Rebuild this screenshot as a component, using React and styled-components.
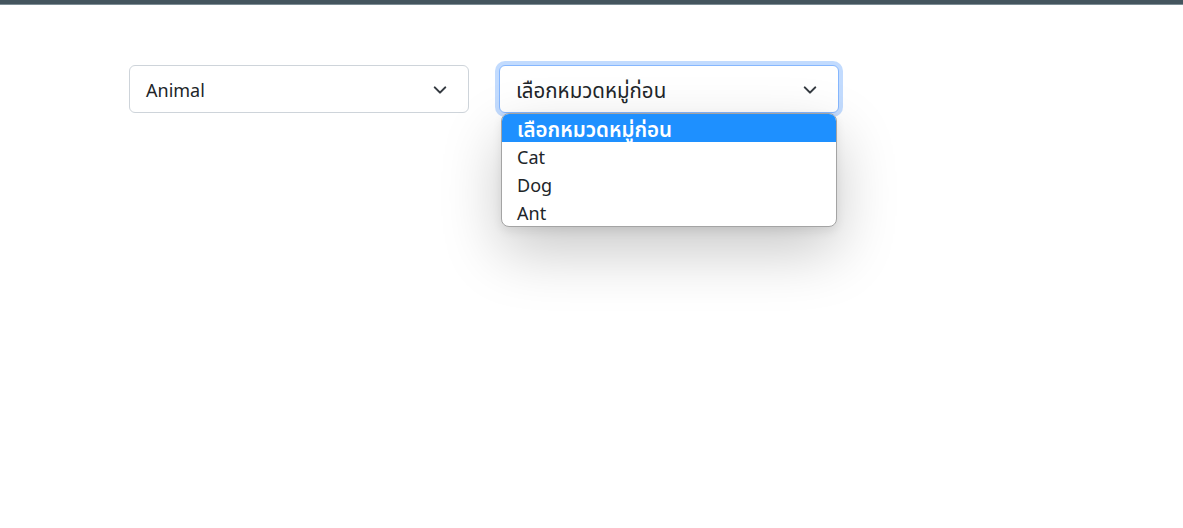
import React from "react";
import styled, { createGlobalStyle } from "styled-components";

const GlobalStyle = createGlobalStyle`
  body {
    margin: 0;
    background: #fff;
    font-family: "Segoe UI", "Noto Sans", "Noto Sans Thai", "Open Sans", sans-serif;
    color: #212529;
  }
`;

const TopBar = styled.div`
  height: 4px;
  background: #44555e;
  border-bottom: 1px solid #7d8d95;
`;

const Page = styled.div`
  padding: 60px 0 0 129px;
  height: 463px;
  box-sizing: border-box;
`;

const Row = styled.div`
  display: flex;
  gap: 30px;
  align-items: flex-start;
`;

const SelectWrap = styled.div`
  position: relative;
  width: 340px;
`;

const SelectBox = styled.div`
  box-sizing: border-box;
  height: 48px;
  display: flex;
  align-items: center;
  justify-content: space-between;
  padding: 1px 21px 0 16px;
  border: 1px solid ${(p) => (p.$focused ? "#86b7fe" : "#ced4da")};
  border-radius: 6px;
  background: #fff;
  font-size: 18px;
  line-height: 30px;
  box-shadow: ${(p) =>
    p.$focused ? "0 0 0 4px rgba(13, 110, 253, 0.25)" : "none"};
`;

const ThaiText = styled.span`
  font-size: ${(p) => (p.$size ? p.$size : 20.5)}px;
`;

const Chevron = () => (
  <svg width="14" height="14" viewBox="0 0 16 16" fill="none">
    <path
      d="M2 5l6 6 6-6"
      stroke="#343a40"
      strokeWidth="2.4"
      strokeLinecap="round"
      strokeLinejoin="round"
    />
  </svg>
);

const Menu = styled.ul`
  position: absolute;
  top: 48px;
  left: 2px;
  right: 2px;
  margin: 0;
  padding: 0;
  list-style: none;
  background: #fff;
  border: 1px solid #a4a4a4;
  border-radius: 8px;
  overflow: hidden;
  box-shadow: 0 24px 60px rgba(0, 0, 0, 0.22), 0 4px 10px rgba(0, 0, 0, 0.08);
`;

const Option = styled.li`
  height: 28px;
  line-height: 30px;
  padding: 0 15px;
  font-size: 18px;
  background: ${(p) => (p.$active ? "#1e90ff" : "transparent")};
  color: ${(p) => (p.$active ? "#fff" : "#212529")};
  font-weight: ${(p) => (p.$active ? 600 : 400)};
`;

const options = ["เลือกหมวดหมู่ก่อน", "Cat", "Dog", "Ant"];

export default function App() {
  return (
    <>
      <GlobalStyle />
      <TopBar />
      <Page>
        <Row>
          <SelectWrap>
            <SelectBox>
              <span>Animal</span>
              <Chevron />
            </SelectBox>
          </SelectWrap>
          <SelectWrap>
            <SelectBox $focused>
              <ThaiText>เลือกหมวดหมู่ก่อน</ThaiText>
              <Chevron />
            </SelectBox>
            <Menu>
              {options.map((o, i) => (
                <Option key={o} $active={i === 0}>
                  {i === 0 ? <ThaiText $size={20.5}>{o}</ThaiText> : o}
                </Option>
              ))}
            </Menu>
          </SelectWrap>
        </Row>
      </Page>
    </>
  );
}
